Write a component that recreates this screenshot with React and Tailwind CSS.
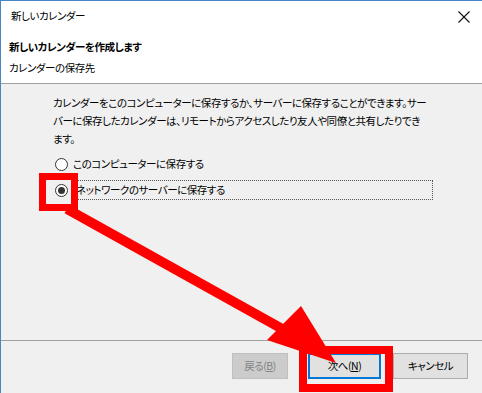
import React from "react";

const font = { fontFamily: '"Noto Sans CJK JP", "Noto Sans", sans-serif', fontFeatureSettings: '"palt"' };

function Radio({ checked }) {
  return (
    <div className="w-[13px] h-[13px] rounded-full border border-[#333333] bg-white flex items-center justify-center shrink-0">
      {checked && <div className="w-[7px] h-[7px] rounded-full bg-[#333333]" />}
    </div>
  );
}

export default function App() {
  return (
    <div
      className="relative w-[482px] h-[393px] overflow-hidden bg-[#f0f0f0] border-l border-t border-[#4a84c9] text-black text-[10.5px] tracking-[-0.45px] whitespace-nowrap flex flex-col"
      style={font}
    >
      {/* title bar */}
      <div className="h-[31px] bg-white flex items-center justify-between pl-[10px] pr-[8px]">
        <span className="leading-none">新しいカレンダー</span>
        <svg width="14" height="14" viewBox="0 0 14 14" className="mr-[3px]">
          <path d="M1.5 1.5 L12.5 12.5 M12.5 1.5 L1.5 12.5" stroke="#111" strokeWidth="1.1" />
        </svg>
      </div>
      {/* header */}
      <div className="bg-white pl-[8px] pt-[5px] pb-[5px] border-b border-[#a0a0a0]">
        <div className="h-[20px] leading-[20px] font-bold">新しいカレンダーを作成します</div>
        <div className="h-[20px] leading-[20px] mt-[1px]">カレンダーの保存先</div>
      </div>
      {/* body */}
      <div className="flex-1 pl-[52px] pt-[10px] border-b border-[#a0a0a0]">
        <div className="leading-[18px]">
          <div>カレンダーをこのコンピューターに保存するか、サーバーに保存することができます。サー</div>
          <div>バーに保存したカレンダーは、リモートからアクセスしたり友人や同僚と共有したりでき</div>
          <div>ます。</div>
        </div>
        <div className="mt-[6px] h-[20px] flex items-center pl-[2px]">
          <Radio />
          <span className="ml-[5px]">このコンピューターに保存する</span>
        </div>
        <div className="mt-[6px] h-[20px] flex items-center pl-[2px]">
          <Radio checked />
          <div className="ml-[6px] w-[359px] h-[20px] border border-dotted border-[#555] flex items-center pl-[1px]">
            ネットワークのサーバーに保存する
          </div>
        </div>
      </div>
      {/* buttons */}
      <div className="h-[52px] flex justify-end items-start pt-[12px] pr-[14px]">
        <div className="w-[56px] h-[26px] bg-[#cccccc] border border-[#bfbfbf] text-[#838383] flex items-center justify-center">
          戻る(<span className="underline">B</span>)
        </div>
        <div className="ml-[20px] w-[73px] h-[26px] bg-[#e1e1e1] border-2 border-[#0078d7] flex items-center justify-center">
          次へ(<span className="underline">N</span>)
        </div>
        <div className="ml-[12px] w-[75px] h-[26px] bg-[#e1e1e1] border border-[#adadad] flex items-center justify-center">
          キャンセル
        </div>
      </div>

      {/* annotations */}
      <svg className="absolute left-0 top-0 pointer-events-none" width="482" height="393">
        <line x1="66" y1="208" x2="285" y2="330" stroke="#ff0000" strokeWidth="10" />
        <polygon points="266,339 300,305 335,362" fill="#ff0000" />
      </svg>
      <div className="absolute left-[38px] top-[172px] w-[39px] h-[38px] border-[7px] border-[#ff0000]" />
      <div className="absolute left-[298px] top-[345px] w-[94px] h-[46px] border-[8px] border-[#ff0000]" />
    </div>
  );
}
